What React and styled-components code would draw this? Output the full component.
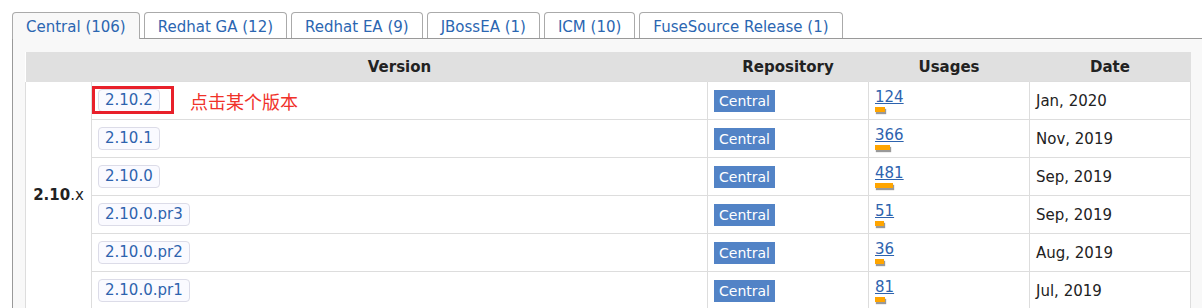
import React from 'react'
import styled, { createGlobalStyle } from 'styled-components'

const GlobalStyle = createGlobalStyle`
  body {
    margin: 0;
    background: #fff;
    font-family: "DejaVu Sans", Verdana, sans-serif;
  }
`

const Page = styled.div`
  padding: 12px 0 0 12px;
  height: 296px;
  overflow: hidden;
`

const TabBar = styled.ul`
  display: flex;
  gap: 4px;
  margin: 0;
  padding: 0;
  list-style: none;
  border-bottom: 1px solid #999;
  height: 26px;
`

const Tab = styled.li`
  box-sizing: border-box;
  padding: 0 13px;
  border: 1px solid #aaa;
  border-bottom: none;
  border-radius: 4px 4px 0 0;
  background: ${p => (p.$active ? '#f8f8f8' : '#fff')};
  color: #2b66b1;
  font-size: 15px;
  line-height: 28px;
  white-space: nowrap;
  margin-bottom: ${p => (p.$active ? '-1px' : '0')};
  height: ${p => (p.$active ? '27px' : '26px')};
`

const Panel = styled.div`
  background: #f8f8f8;
  border-left: 1px solid #999;
  padding: 13px 12px 0 12px;
  height: 400px;
`

const Table = styled.table`
  border-collapse: collapse;
  width: 1165px;
  table-layout: fixed;
  background: #fff;
  font-size: 15px;
  color: #222;
`

const Head = styled.th`
  background: #e0e0e0;
  height: 29px;
  padding: 0;
  font-weight: bold;
  text-align: center;
  border-right: 1px solid #e0e0e0;
`

const Cell = styled.td`
  height: 37px;
  padding: 0 6px;
  border: 1px solid #ddd;
  vertical-align: middle;
  position: relative;
`

const GroupCell = styled.td`
  border: 1px solid #ddd;
  border-top: none;
  text-align: center;
  vertical-align: middle;
  font-size: 15px;
  padding: 0;
  b {
    font-weight: bold;
  }
`

const VersionLink = styled.a`
  display: inline-block;
  box-sizing: border-box;
  height: 23px;
  line-height: 21px;
  padding: 0 6px;
  border: 1px solid #dcdce8;
  border-radius: 4px;
  background: #fafaff;
  color: #2e63ae;
  text-decoration: none;
`

const Highlight = styled.span`
  position: absolute;
  left: 0;
  top: 4px;
  width: 82px;
  height: 28px;
  box-sizing: border-box;
  border: 3px solid #e8202a;
`

const Note = styled.span`
  position: absolute;
  left: 98px;
  top: 8px;
  color: #f0322a;
  font-family: "Noto Sans CJK SC", sans-serif;
  font-size: 18px;
  line-height: 22px;
`

const Badge = styled.span`
  display: inline-block;
  height: 22px;
  line-height: 22px;
  padding: 0 5px;
  background: #5283c6;
  color: #fff;
  font-size: 14px;
`

const Usage = styled.div`
  display: flex;
  flex-direction: column;
  align-items: flex-start;
  a {
    color: #2e63ae;
    text-decoration: underline;
    text-decoration-thickness: 1px;
    line-height: 17px;
  }
`

const Bar = styled.span`
  display: block;
  height: 5px;
  margin-top: 1px;
  background: #ffa500;
  box-shadow: 1px 2px 1px #999;
`

const rows = [
  { v: '2.10.2', n: 124, d: 'Jan, 2020', bar: 10 },
  { v: '2.10.1', n: 366, d: 'Nov, 2019', bar: 15 },
  { v: '2.10.0', n: 481, d: 'Sep, 2019', bar: 18 },
  { v: '2.10.0.pr3', n: 51, d: 'Sep, 2019', bar: 9 },
  { v: '2.10.0.pr2', n: 36, d: 'Aug, 2019', bar: 9 },
  { v: '2.10.0.pr1', n: 81, d: 'Jul, 2019', bar: 10 },
]

const tabs = [
  'Central (106)',
  'Redhat GA (12)',
  'Redhat EA (9)',
  'JBossEA (1)',
  'ICM (10)',
  'FuseSource Release (1)',
]

export default function App() {
  return (
    <Page>
      <GlobalStyle />
      <TabBar>
        {tabs.map((t, i) => (
          <Tab key={t} $active={i === 0}>{t}</Tab>
        ))}
      </TabBar>
      <Panel>
        <Table>
          <colgroup>
            <col style={{ width: 66 }} />
            <col style={{ width: 616 }} />
            <col style={{ width: 161 }} />
            <col style={{ width: 161 }} />
            <col style={{ width: 161 }} />
          </colgroup>
          <thead>
            <tr>
              <Head />
              <Head>Version</Head>
              <Head>Repository</Head>
              <Head>Usages</Head>
              <Head>Date</Head>
            </tr>
          </thead>
          <tbody>
            {rows.map((r, i) => (
              <tr key={r.v}>
                {i === 0 && (
                  <GroupCell rowSpan={6}>
                    <b>2.10</b>.x
                  </GroupCell>
                )}
                <Cell>
                  <VersionLink>{r.v}</VersionLink>
                  {i === 0 && (
                    <>
                      <Highlight />
                      <Note>点击某个版本</Note>
                    </>
                  )}
                </Cell>
                <Cell>
                  <Badge>Central</Badge>
                </Cell>
                <Cell>
                  <Usage>
                    <a>{r.n}</a>
                    <Bar style={{ width: r.bar }} />
                  </Usage>
                </Cell>
                <Cell>{r.d}</Cell>
              </tr>
            ))}
          </tbody>
        </Table>
      </Panel>
    </Page>
  )
}
